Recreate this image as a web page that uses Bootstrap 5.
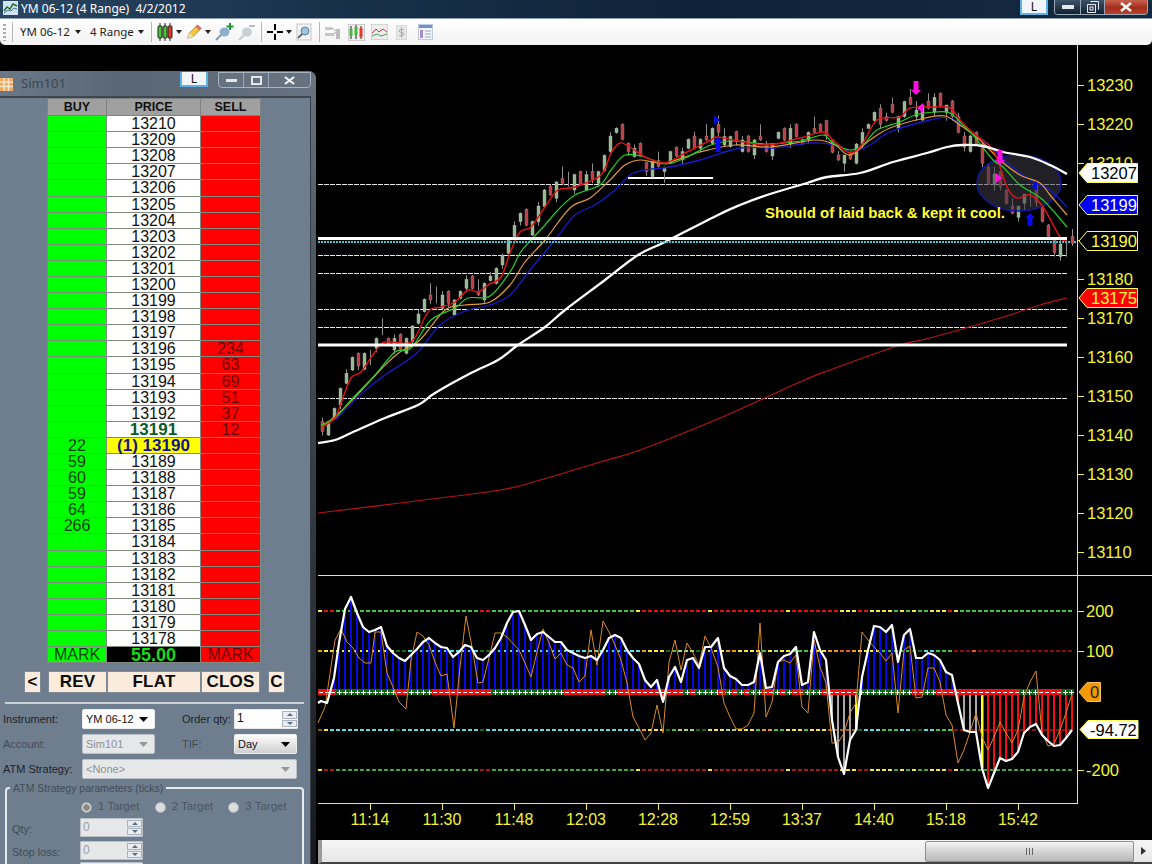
<!DOCTYPE html>
<html lang="en">
<head>
<meta charset="utf-8">
<title>YM 06-12 (4 Range) 4/2/2012</title>
<link href="https://cdn.jsdelivr.net/npm/bootstrap@5.3.0/dist/css/bootstrap.min.css" rel="stylesheet">
<style>
html,body{margin:0;background:#000;width:1152px;height:864px;overflow:hidden}
.desk{position:relative;width:1152px;height:864px;font-family:"Liberation Sans",Arial,sans-serif}
.app-title{height:19px;background:linear-gradient(90deg,#2a4561 0,#17304a 30%,#0f2338 60%,#14293f 100%);border-bottom:1px solid #8fa0b0;color:#fff;font:12px/17px "Noto Sans",sans-serif;padding-left:3px}
.app-title .ttl{margin-left:2px}
.lbtn{width:28px;height:15px;background:#f2f5f8;border:2px solid #5db1e4;border-top-width:0;color:#111;font:12px/13px "Noto Sans",sans-serif;text-align:center;padding:0;border-radius:0}
.capbox{display:flex;height:15px;border:1px solid #99a6b3;border-top:0;border-radius:0 0 4px 4px;overflow:hidden}
.capbox i{display:flex;align-items:center;justify-content:center;border-right:1px solid #99a6b3}
.capbox i:last-child{border-right:0}
.app-caps{margin-right:4px}
.app-caps .lbtn{margin-right:6px}
.app-min{width:26px;background:linear-gradient(#3e5268,#0f2134)}
.app-res{width:24px;background:linear-gradient(#3e5268,#0f2134)}
.app-cls{width:42px;background:linear-gradient(#c8614f,#a22d1c 55%,#b7432d)}
.tool-strip{height:26px;background:linear-gradient(#fff,#f2f2f2);border-radius:0 0 5px 5px;font:11.5px/26px "Noto Sans",sans-serif;color:#222;padding-left:3px}
.tgrip{width:3px;height:17px;background:repeating-linear-gradient(#aaa 0 2px,transparent 2px 4px)}
.tsep{width:1px;height:20px;background:#b8b8b8}
.tcar{width:0;height:0;border:3px solid transparent;border-top:4px solid #222;border-bottom:0;margin:0 0 0 3px}
.gap4{margin-left:4px}.gap5{margin-left:5px}.gap6{margin-left:6px}.gap7{margin-left:7px}.gap8{margin-left:8px}.gap9{margin-left:9px}.gap11{margin-left:11px}
.chart-host{height:795px;line-height:0}
.chart-host svg{display:block}
.cht-lbl{font:16.5px "Liberation Sans",Arial,sans-serif;fill:#f4f430}
.note{font:bold 15px "Liberation Sans",Arial,sans-serif;fill:#ffff33}
.hscroll{height:24px;background:linear-gradient(#f6f6f6,#e6e6e6);border-bottom:2px solid #444;border-left:4px solid #9a9a9a;margin-left:318px}
.thumb{margin-left:603px;width:209px;height:21px;background:linear-gradient(#f4f4f4,#d4d4d4 50%,#b9b9b9);border:1px solid #8e8e8e;border-radius:2px}
.grip3{width:8px;height:7px;background:repeating-linear-gradient(90deg,#666 0 1px,transparent 1px 3px)}
.sarrow{width:0;height:0;border:4px solid transparent;border-left:5px solid #333;border-right:0;margin-left:7px}
.sim-win{position:absolute;left:0;top:71px;width:316px;height:793px;background:#6f7e8f;border-radius:0 8px 0 0;overflow:hidden;font-size:11px;color:#1b232b}
.sim-rim{position:absolute;right:0;top:0;bottom:0;width:5px;background:linear-gradient(#68747f,#3a4149 45%,#16191d)}
.sim-head{height:25px;background:linear-gradient(90deg,#6a7887,#586675 40%,#66727f);color:#3c4753;font:13px/24px "Noto Sans",sans-serif;padding-right:5px}
.sim-head .lbtn{margin-top:1px;margin-right:10px}
.sim-head .capbox{margin-top:1px;background:#66727f;border-color:#a9b3bd;width:93px;border-top:1px solid #a9b3bd;height:16px}
.sim-head .capbox i{flex:1 1 0}
.sim-head .capbox i:last-child{flex:1.7 1 0}
.sim-icon{margin-top:7px}
.sim-body{border-top:2px solid #3e464f;margin-right:5px;height:768px;overflow:hidden;border-right:1px solid #353c44}
.table.ladder{table-layout:fixed;width:213px;margin:0 0 0 47px;border-collapse:collapse;--bs-table-bg:transparent}
.table.ladder>*>tr>*{padding:0;border:1px solid #808a80;height:16px;line-height:14px;text-align:center;box-shadow:none;vertical-align:middle;font-size:16px;color:#111}
.table.ladder>*>tr.rtall>*{height:17px}
.table.ladder>thead>tr>th{background:#a0a0a0;font-size:12.5px;font-weight:700;height:17px;border-color:#808080}
.table.ladder>tbody>tr>td.cbuy{background:#00ff00;color:#0b3d0b}
.table.ladder>tbody>tr>td.csell{background:#ff0000;color:#6a0505}
.table.ladder>tbody>tr>td.cprice{background:#fff}
.table.ladder>tbody>tr>td.cbest{background:#fff;color:#0a5a2a;font-weight:700;font-size:17px}
.table.ladder>tbody>tr>td.cmine{background:#ffff00;color:#14148c;font-weight:700;font-size:17px}
.table.ladder>tbody>tr>td.clast{background:#000;color:#19d919;font-weight:700;font-size:18px}
.lcol-a{width:59px}.lcol-b{width:94px}.lcol-c{width:60px}
.action-row{margin:8px 0 0 24px}
.act{background:#faebdc;color:#0c0c0c;border:1px solid #7f8a95;border-radius:0;height:22px;padding:0;font:bold 17px/20px "Liberation Sans",Arial,sans-serif;letter-spacing:.2px}
.act:hover{background:#faebdc;color:#0c0c0c}
.a-arrow{width:17px;margin-right:7px}.a-mid{width:59px}.a-flat{width:94px}.a-clos{width:59px;margin-right:8px}.a-c{width:17px}
.form-rule{margin:9px 6px 5px 5px;border:0;border-top:2px solid #c8d0d8;opacity:1}
.opt-row{height:20px;margin-bottom:5px;padding-left:3px}
.opt-row label{margin:0;line-height:20px}
.opt-row .lbl-a{width:79px}
.opt-row .lbl-b{width:52px;margin-left:27px}
.opt-row .lbl-off{color:#414c58}
.opt-sel.form-select{height:20px;min-height:0;padding:0 0 0 3px;font:11px/18px "Liberation Sans",Arial,sans-serif;border:1px solid #eee;border-radius:2px;background-color:#fff;color:#111;background-size:9px 5px;background-position:right 6px center;background-image:url("data:image/svg+xml,%3Csvg xmlns='http://www.w3.org/2000/svg' viewBox='0 0 9 5'%3E%3Cpath d='M0 0h9L4.5 5z' fill='%23000'/%3E%3C/svg%3E")}
.opt-sel.form-select:disabled{background-color:#e6e7e8;color:#8b9198;border-color:#b9c0c7;background-image:url("data:image/svg+xml,%3Csvg xmlns='http://www.w3.org/2000/svg' viewBox='0 0 9 5'%3E%3Cpath d='M0 0h9L4.5 5z' fill='%23999'/%3E%3C/svg%3E")}
.opt-grad.form-select{background-color:#e4e4e4;background-image:url("data:image/svg+xml,%3Csvg xmlns='http://www.w3.org/2000/svg' viewBox='0 0 9 5'%3E%3Cpath d='M0 0h9L4.5 5z' fill='%23000'/%3E%3C/svg%3E"),linear-gradient(#fcfcfc,#cfcfcf);background-position:right 6px center,0 0;background-size:9px 5px,100% 100%}
.w73{width:73px;flex:none}.w62{width:63px;flex:none}.w215{width:215px;flex:none}
.spin-box{background:#fff;border:1px solid #e8e8e8;height:20px;width:64px;flex:none;border-radius:1px;padding-left:2px;line-height:16px;color:#111;font-size:12px}
.spin-box.spin-off{background:#e6e7e8;color:#9a9ea4;width:63px;height:19px;border-color:#b9c0c7}
.spin-col{width:15px;margin-left:auto;height:100%;display:flex;flex-direction:column;gap:1px;padding:1px 0}
.spin-col b{flex:1;background:#e9edf2;border:1px solid #aab3bd;display:flex;align-items:center;justify-content:center}
.spin-col b::after{content:"";border:3px solid transparent}
.spin-col b.sup::after{border-bottom:3px solid #5a6c88;border-top:0}
.spin-col b.sdn::after{border-top:3px solid #5a6c88;border-bottom:0}
.atm-set{border:2px solid #e7eaed;border-radius:4px;margin:-3px 6px 0 5px;padding:0 0 0 5px;height:120px}
.atm-set legend{float:none;width:auto;font-size:10.5px;line-height:14px;margin:0 0 0 -2px;padding:0 3px;color:#414c58}
.radio-line{padding-left:69px;height:23px;padding-top:4px;color:#4a5562;font-size:11.5px}
.radio-one{width:76px;height:16px;display:flex;align-items:center;gap:6px}
.radio-one .form-check-input{width:11px;height:11px;margin:0;opacity:1;background-color:#dcdcdc;border-color:#aab0b7;float:none}
.radio-one .form-check-input:checked{background-color:#d8d8d8;border-color:#9aa0a6;background-image:radial-gradient(circle,#888 0 3px,transparent 3.5px)}
.qty-line{height:19px;margin-bottom:4px;color:#414c58}
.qty-line:nth-child(4){margin-bottom:2px}
.qty-line label{width:68px;margin:0;line-height:22px}
</style>
</head>
<body>
<div class="desk">
  <header class="app-title d-flex align-items-start">
    <svg width="16" height="15" viewBox="0 0 16 15"><rect width="15" height="14" y="1" fill="#cfe3f3"/><path d="M1 11l3-4 3 2 3-5 4 2" stroke="#2a6a2a" stroke-width="1.5" fill="none"/><path d="M1 13l4-3 3 1 3-3 3 1" stroke="#3b6fb0" fill="none"/></svg>
    <span class="ttl">YM 06-12 (4 Range)&nbsp;&nbsp;4/2/2012</span>
    <div class="ms-auto d-flex app-caps">
      <button type="button" class="btn lbtn">L</button>
      <div class="capbox">
        <i class="app-min"><svg width="12" height="4"><rect width="12" height="4" fill="#e4e8ec"/></svg></i>
        <i class="app-res"><svg width="12" height="12" viewBox="0 0 12 12"><path d="M3.5.5h8v8M.5 3.5h8v8h-8z" fill="none" stroke="#e8ecf0"/><rect x="3" y="6" width="3" height="3" fill="none" stroke="#e8ecf0"/></svg></i>
        <i class="app-cls"><svg width="14" height="10" viewBox="0 0 14 10"><path d="M2 1l10 8M12 1L2 9" stroke="#f4f4f4" stroke-width="2.6"/></svg></i>
      </div>
    </div>
  </header>
  <nav class="tool-strip d-flex align-items-center">
    <div class="tgrip"></div><div class="tsep gap6"></div>
    <span class="gap7">YM 06-12</span><i class="tcar gap5"></i>
    <span class="gap9">4 Range</span><i class="tcar gap4"></i>
    <div class="tsep gap7"></div>
    <svg class="gap5" width="16" height="18" viewBox="0 0 16 18"><g stroke="#222"><path d="M3 0v18M8 0v18M13 0v18"/><rect x="1" y="3" width="4" height="12" rx="1" fill="#4bc33c"/><rect x="6" y="3" width="4" height="12" rx="1" fill="#4bc33c"/><rect x="11" y="3" width="4" height="12" rx="1" fill="#e03a2b"/></g></svg><i class="tcar"></i>
    <svg class="gap4" width="16" height="18" viewBox="0 0 18 18"><path d="M2 16l2-6L13 1l4 4-9 9z" fill="#f2c83c" stroke="#a6852a"/><path d="M2 16l2-6 4 4z" fill="#f6e3b0"/><path d="M13 1l4 4-2 2-4-4z" fill="#d86a6a"/></svg><i class="tcar"></i>
    <svg class="gap4" width="19" height="18" viewBox="0 0 19 18"><path d="M1 17l6-6" stroke="#8a9aaa" stroke-width="2"/><ellipse cx="9.500" cy="9" rx="5" ry="4.500" fill="#8fb0cc"/><path d="M15 0v7M11.500 3.500h7" stroke="#1f9a2e" stroke-width="2"/></svg>
    <svg class="gap4" width="18" height="18" viewBox="0 0 18 18"><path d="M1 17l6-6" stroke="#c4c8cc" stroke-width="2"/><ellipse cx="9" cy="9" rx="5" ry="4.500" fill="#c9cfd4"/><path d="M11 3h6" stroke="#bbb" stroke-width="2"/></svg>
    <div class="tsep gap5"></div>
    <svg class="gap5" width="16" height="16" viewBox="0 0 16 16"><path d="M8 0v6M8 10v6M0 8h6M10 8h6" stroke="#000" stroke-width="2"/></svg><i class="tcar"></i>
    <svg class="gap4" width="16" height="18" viewBox="0 0 16 18"><rect x="1" y="1" width="14" height="16" fill="#f4f4f4" stroke="#c4c4c4"/><circle cx="9" cy="8" r="4" fill="#9ec2e0" stroke="#5c83a6"/><path d="M6 11l-4 4" stroke="#666" stroke-width="2"/></svg>
    <div class="tsep gap7"></div>
    <svg class="gap5" width="16" height="16" viewBox="0 0 16 16"><path d="M0 3h7v3H0zM0 9h9v3H0z" fill="#c8c8c8"/><path d="M11 5h4v10h-4z" fill="#bbb"/><path d="M7 4l4 3M9 10l2-2" stroke="#aaa"/></svg>
    <svg class="gap7" width="17" height="17" viewBox="0 0 17 17"><rect width="17" height="17" fill="#eee" stroke="#aaa"/><path d="M3 2v13M8 1v14M13 2v13" stroke="#222"/><rect x="1.500" y="5" width="3" height="7" fill="#45b83a"/><rect x="6.500" y="3" width="3" height="8" fill="#45b83a"/><rect x="11.500" y="4" width="3" height="9" fill="#e03a2b"/></svg>
    <svg class="gap6" width="17" height="16" viewBox="0 0 17 16"><rect width="17" height="16" fill="#eee" stroke="#bbb"/><path d="M1 9l4-4 3 3 4-3 4 3" stroke="#d35" fill="none"/><path d="M1 12l5-2 4 2 6-2" stroke="#4a4" fill="none"/></svg>
    <svg class="gap8" width="11" height="15" viewBox="0 0 11 15"><rect width="11" height="15" fill="#e8e8e8" stroke="#ccc"/><path d="M8 5c-1-1-5-1-5 1s5 1 5 3-4 2-5 1M5.500 2v11" stroke="#aaa" fill="none"/></svg>
    <svg class="gap11" width="15" height="16" viewBox="0 0 15 16"><rect width="15" height="16" fill="#f4f6fa" stroke="#8da2c4"/><rect x="1" y="1" width="13" height="3" fill="#6f93c9"/><rect x="2" y="6" width="3" height="8" fill="#a98bd1"/><path d="M7 7h6M7 10h6M7 13h6" stroke="#8ab"/></svg>
  </nav>
  <div class="chart-host" id="chart"></div>
  <div class="hscroll d-flex align-items-center">
    <div class="thumb d-flex align-items-center justify-content-center"><div class="grip3"></div></div>
    <div class="sarrow"></div>
  </div>

  <section class="sim-win">
    <div class="sim-rim"></div>
    <div class="sim-head d-flex align-items-start">
      <svg class="sim-icon" width="13" height="13" viewBox="0 0 13 13"><rect width="13" height="13" fill="#f2a95e"/><path d="M4 0v13M8.500 0v13M0 4h13M0 8.500h13" stroke="#f7e5cf" stroke-width="1.500"/></svg>
      <span class="ms-2">Sim101</span>
      <button type="button" class="btn lbtn ms-auto">L</button>
      <div class="capbox">
        <i><svg width="11" height="3"><rect width="11" height="3" fill="#e4e8ec"/></svg></i>
        <i><svg width="11" height="9"><rect x="1" y="1" width="9" height="7" fill="none" stroke="#e4e8ec" stroke-width="2"/></svg></i>
        <i><svg width="11" height="9" viewBox="0 0 11 9"><path d="M1 1l9 7M10 1L1 8" stroke="#f0f0f0" stroke-width="2.200"/></svg></i>
      </div>
    </div>
    <div class="sim-body">
      <table class="table ladder">
        <colgroup><col class="lcol-a"><col class="lcol-b"><col class="lcol-c"></colgroup>
        <thead><tr><th>BUY</th><th>PRICE</th><th>SELL</th></tr></thead>
        <tbody id="ladder"></tbody>
      </table>
      <div class="action-row d-flex">
        <button type="button" class="btn act a-arrow">&lt;</button>
        <button type="button" class="btn act a-mid">REV</button>
        <button type="button" class="btn act a-flat">FLAT</button>
        <button type="button" class="btn act a-clos">CLOS</button>
        <button type="button" class="btn act a-c">C</button>
      </div>
      <hr class="form-rule">
      <div class="d-flex align-items-center opt-row">
        <label class="lbl-a">Instrument:</label>
        <select class="form-select opt-sel w73"><option>YM 06-12</option></select>
        <label class="lbl-b">Order qty:</label>
        <div class="spin-box d-flex"><span>1</span><div class="spin-col"><b class="sup"></b><b class="sdn"></b></div></div>
      </div>
      <div class="d-flex align-items-center opt-row">
        <label class="lbl-a lbl-off">Account:</label>
        <select class="form-select opt-sel w73" disabled><option>Sim101</option></select>
        <label class="lbl-b lbl-off">TIF:</label>
        <select class="form-select opt-sel opt-grad w62"><option>Day</option></select>
      </div>
      <div class="d-flex align-items-center opt-row">
        <label class="lbl-a">ATM Strategy:</label>
        <select class="form-select opt-sel w215" disabled><option>&lt;None&gt;</option></select>
      </div>
      <fieldset class="atm-set">
        <legend>ATM Strategy parameters (ticks)</legend>
        <div class="radio-line d-flex">
          <div class="radio-one"><input class="form-check-input" type="radio" name="tg" checked disabled><span>1 Target</span></div>
          <div class="radio-one"><input class="form-check-input" type="radio" name="tg" disabled><span>2 Target</span></div>
          <div class="radio-one"><input class="form-check-input" type="radio" name="tg" disabled><span>3 Target</span></div>
        </div>
        <div class="qty-line d-flex"><label>Qty:</label><div class="spin-box spin-off d-flex"><span>0</span><div class="spin-col"><b class="sup"></b><b class="sdn"></b></div></div></div>
        <div class="qty-line d-flex"><label>Stop loss:</label><div class="spin-box spin-off d-flex"><span>0</span><div class="spin-col"><b class="sup"></b><b class="sdn"></b></div></div></div>
        <div class="qty-line d-flex"><label></label><div class="spin-box spin-off d-flex"></div></div>
      </fieldset>
    </div>
  </section>
</div>
<script src="https://cdn.jsdelivr.net/npm/bootstrap@5.3.0/dist/js/bootstrap.bundle.min.js"></script>
<script>
(function(){
/* ladder */
var buy={13190:22,13189:59,13188:60,13187:59,13186:64,13185:266};
var sell={13196:234,13195:63,13194:69,13193:51,13192:37,13191:12};
var tall={13206:1,13195:1,13184:1};
var h='';
for(var p=13210;p>=13178;p--){
  var cls=p===13191?'cbest':p===13190?'cmine':'cprice';
  var txt=p===13190?'(1) 13190':p;
  h+='<tr'+(tall[p]?' class="rtall"':'')+'><td class="cbuy">'+(buy[p]||'')+'</td><td class="'+cls+'">'+txt+'</td><td class="csell">'+(sell[p]||'')+'</td></tr>';
}
h+='<tr><td class="cbuy">MARK</td><td class="clast">55.00</td><td class="csell">MARK</td></tr>';
document.getElementById('ladder').innerHTML=h;

/* chart: all coordinates are page pixels */
var s='';
function poly(pts,c,w,ex){return '<polyline fill="none" stroke="'+c+'" stroke-width="'+w+'" stroke-linejoin="round" points="'+pts.map(function(a){return a[0]+','+a[1]}).join(' ')+'" '+(ex||'')+'/>';}
function line(x1,y1,x2,y2,c,w,ex){return '<line x1="'+x1+'" y1="'+y1+'" x2="'+x2+'" y2="'+y2+'" stroke="'+c+'" stroke-width="'+(w||1)+'" '+(ex||'')+'/>';}
function txt2(x,y,t,cl,ex){return '<text x="'+x+'" y="'+y+'" class="'+(cl||'cht-lbl')+'" '+(ex||'')+'>'+t+'</text>';}
function smooth(p,c,w){var d='M'+p[0][0]+' '+p[0][1];for(var i=0;i<p.length-1;i++){var a=p[i-1]||p[i],b=p[i],e=p[i+1],f=p[i+2]||e;d+='C'+(b[0]+(e[0]-a[0])/6)+' '+(b[1]+(e[1]-a[1])/6)+' '+(e[0]-(f[0]-b[0])/6)+' '+(e[1]-(f[1]-b[1])/6)+' '+e[0]+' '+e[1];}return '<path d="'+d+'" fill="none" stroke="'+c+'" stroke-width="'+w+'"/>';}

/* horizontal levels, behind candles */
[184,255,273,309,327,398].forEach(function(y){s+=line(318,y+.5,1067,y+.5,'#e8e8e8',1,'stroke-dasharray="5 1"');});
s+=line(628,178,713,178,'#fff',2);

/* candles: [zoomX, top, bottom, type, wickTop, wickBottom] u up, d down, w wick only */
var c7=[[13,905,935,'d'],[31,905,945,'u'],[49,865,895,'u'],[67,805,855,'u'],[85,760,790,'u'],[103,712,750,'u'],[121,700,738,'d'],[139,700,748,'u'],[157,690,735,'w'],[175,655,685,'u'],[193,595,645,'w'],[211,655,672,'d'],[229,655,690,'u'],[247,643,688,'d'],[265,655,700,'u'],[283,618,665,'u'],[301,582,610,'u'],[319,538,575,'u'],[337,525,540,'d',490],[355,500,550,'w'],[373,525,565,'u'],[391,514,550,'d'],[409,540,585,'u'],[427,514,535,'u'],[445,478,505,'u'],[463,468,505,'d'],[481,515,525,'d',478],[499,490,540,'u'],[517,468,482,'u'],[535,445,490,'u'],[553,405,435,'u'],[571,362,400,'u'],[589,316,350,'u'],[607,280,305,'u'],[625,268,316,'d'],[643,305,345,'u'],[661,258,305,'u'],[679,210,260,'u'],[697,198,225,'d'],[715,186,235,'u'],[733,175,190,'d',140],[751,155,200,'w'],[769,164,210,'u'],[787,155,195,'d'],[805,164,210,'u'],[823,154,178,'d',130],[841,155,190,'u'],[859,106,152,'u'],[877,48,95,'u'],[895,25,38,'u'],[913,13,58,'d'],[931,70,95,'d'],[949,85,110,'u'],[967,70,106,'d'],[985,128,155,'d'],[1003,125,170,'u'],[1021,122,140,'d',95],[1039,145,155,'u',140,188],[1057,95,130,'u'],[1075,82,108,'d'],[1093,95,120,'u'],[1111,58,85,'u'],[1129,48,85,'d',35],[1147,58,85,'u'],[1165,48,60,'d',12],[1183,25,70,'u']];
var c8=[[55,148,172,'d',122],[73,185,210,'u',160],[91,185,215,'u'],[109,170,200,'d'],[127,195,230,'u'],[145,183,230,'d'],[163,195,240,'u'],[181,183,195,'d',148],[199,210,230,'d'],[217,207,243,'u'],[235,172,190,'u'],[253,160,195,'d'],[271,160,207,'u'],[289,148,185,'d'],[307,193,207,'d'],[325,172,195,'u'],[343,160,172,'d',125],[361,148,170,'d'],[379,137,182,'d'],[397,195,232,'d'],[415,240,255,'d'],[433,240,265,'u',240,290],[451,230,252,'d'],[469,207,265,'u'],[487,172,207,'u'],[505,148,160,'u'],[523,112,137,'u'],[541,100,148,'d',88],[559,125,137,'d'],[577,88,112,'d',68],[595,125,160,'u'],[613,80,125,'u'],[631,67,88,'d',42],[649,105,125,'u',78],[667,90,135,'u'],[685,78,100,'d',55],[703,67,112,'u'],[721,55,95,'d'],[739,90,112,'u',90,137],[757,78,125,'d'],[775,125,172,'d']];
var c4=[[103,198,232,'d'],[121,198,245,'u'],[139,187,222,'d'],[157,222,280,'d'],[175,292,340,'d'],[193,312,345,'u',290,362],[211,305,350,'d'],[229,360,400,'d'],[247,408,430,'d',385],[265,408,442,'u',408,455],[283,372,400,'u',372,420],[301,360,410,'w'],[319,345,398,'d'],[337,408,455,'d'],[355,465,500,'d'],[373,512,548,'d'],[391,522,560,'u',510,572],[409,512,560,'w'],[427,500,520,'d',478,525]];
function drawC(list,ox,oy){list.forEach(function(k,i){
  var x=Math.round(ox+k[0]/3)+.5,t=oy+k[1]/3,b=oy+k[2]/3;
  if(k[3]==='w'){s+=line(x,t,x,b,'#8c8c8c',1);return;}
  var wt=k[4]!==undefined?oy+k[4]/3:t-(i%4===0?4:1),wb=k[5]!==undefined?oy+k[5]/3:b+(i%3===0?4:1);
  s+=line(x,wt,x,wb,'#8c8c8c',1);
  s+='<rect x="'+(x-1.5)+'" y="'+t+'" width="3" height="'+(b-t)+'" fill="'+(k[3]==='u'?'#98b892':'#c03c44')+'" stroke="'+(k[3]==='u'?'#b4c4b0':'#a87a7a')+'" stroke-width=".4"/>';
});}
drawC(c7,318,120);drawC(c8,700,75);drawC(c4,930,70);

/* ellipse */
s+='<ellipse cx="1019" cy="183" rx="42" ry="28" fill="#3a3a46" fill-opacity=".55" stroke="#15159c" stroke-width="1.500"/>';

/* moving averages */
s+=smooth([[318,513],[400,503],[500,490],[540,480],[600,462],[640,450],[720,418],[800,382],[830,370],[900,345],[930,338],[1000,318],[1040,305],[1067,298]],'#b81414',1.2);
s+=smooth([[335,420],[360,395],[385,375],[405,362],[420,350],[440,325],[465,311],[490,305],[510,295],[530,270],[555,240],[575,215],[595,205],[615,190],[630,175],[645,170],[670,167],[700,160],[740,148],[775,148],[810,143],[835,145],[852,152],[870,145],[890,132],[930,120],[950,118],[965,128],[985,142],[1010,165],[1030,180],[1050,190],[1067,207]],'#1a1ac8',1.3);
s+=smooth([[321,428],[340,412],[360,392],[385,365],[400,352],[420,340],[445,310],[465,305],[490,302],[510,285],[525,262],[545,240],[570,208],[590,198],[610,180],[625,165],[640,160],[665,163],[700,152],[735,145],[770,147],[815,140],[835,145],[850,155],[870,140],[890,128],[925,118],[945,116],[960,125],[980,140],[1000,160],[1020,175],[1040,183],[1050,195],[1067,215]],'#e09a3a',1.2);
s+=smooth([[321,425],[335,418],[351,400],[375,375],[395,352],[411,348],[431,320],[455,308],[468,298],[490,296],[510,272],[520,253],[531,240],[545,225],[558,210],[575,195],[600,185],[611,170],[625,155],[645,157],[665,164],[685,158],[711,145],[733,141],[767,144],[800,141],[823,135],[833,143],[850,150],[863,145],[877,130],[900,122],[915,115],[935,112],[950,113],[963,125],[973,135],[993,160],[1003,167],[1020,185],[1043,200],[1067,227]],'#22d022',1.2);
s+=smooth([[321,428],[335,418],[341,403],[351,378],[361,372],[375,352],[385,342],[411,342],[425,317],[431,309],[441,307],[455,302],[468,290],[478,292],[488,285],[501,277],[510,253],[520,232],[531,227],[545,207],[558,190],[575,187],[601,175],[611,153],[620,143],[630,147],[645,157],[665,163],[685,153],[711,140],[717,137],[733,140],[767,145],[800,138],[823,132],[833,140],[850,153],[863,143],[877,120],[900,117],[910,108],[933,107],[950,108],[960,120],[973,133],[993,150],[1007,187],[1017,198],[1030,195],[1043,207],[1060,237],[1067,241]],'#e01414',1.4);
s+=smooth([[318,443],[335,440],[351,433],[385,418],[418,405],[435,393],[471,373],[498,360],[518,345],[545,327],[565,310],[605,280],[638,255],[665,242],[718,215],[740,205],[767,195],[807,183],[827,177],[860,173],[893,162],[927,153],[947,147],[963,145],[983,146],[1003,152],[1030,157],[1050,165],[1067,174]],'#fff',2.3);

/* thick levels */
s+=line(318,238.5,1067,238.5,'#fff',3);
s+=line(318,345,1067,345,'#fff',3);
s+=line(318,242,1077,242,'#3cc8d0',2,'stroke-dasharray="2 1"');
s+=line(1072.5,229,1072.5,246,'#8a8a8a',1);
s+='<rect x="1071" y="237" width="3" height="6" fill="#c8434b"/>';

/* arrows */
function arrow(x,y1,y2,c){var d=y2>y1?1:-1;return '<path d="M'+(x-2.5)+' '+y1+'V'+(y2-5*d)+'H'+(x-5)+'L'+x+' '+y2+'L'+(x+5)+' '+(y2-5*d)+'H'+(x+2.5)+'V'+y1+'z" fill="'+c+'"/>';}
s+=arrow(916,81,95,'#ff10e0');s+=arrow(1000,150,165,'#ff10e0');
s+=arrow(1030,226,213,'#0a0af0');s+=arrow(718,152,137,'#0a0af0');
function tri(x,y,dir,c){return '<path d="M'+x+' '+(y-5)+'L'+(x+dir*6)+' '+y+'L'+x+' '+(y+5)+'z" fill="'+c+'"/>';}
s+=tri(923,108,-1,'#ff10e0');s+=tri(996,178,1,'#ff10e0');s+=tri(714,120,1,'#0a0ad0');s+=tri(1037,186,-1,'#0a0ad0');

s+=txt2(765,218,'Should of laid back &amp; kept it cool.','note');

/* main axis */
var AX='#eeee44';
s+=line(1077.5,45,1077.5,804,AX,1);
s+=line(318,575.5,1152,575.5,AX,1);
s+=line(318,803.5,1077,803.5,AX,1);
[[13230,85],[13220,124],[13210,163],[13180,279],[13170,318],[13160,357],[13150,396],[13140,435],[13130,474],[13120,513],[13110,552]].forEach(function(a){
  s+=line(1078,a[1]+.5,1084,a[1]+.5,AX,1);
  s+=txt2(1087,a[1]+6,a[0]);
});
s+=line(1078,240.5,1084,240.5,AX,1);

function tag(x1,y1,y2,x2,fill,stroke,tcol,t,tx){var m=(y1+y2)/2;
  return '<polygon points="'+x1+','+m+' '+(x1+8)+','+y1+' '+x2+','+y1+' '+x2+','+y2+' '+(x1+8)+','+y2+'" fill="'+fill+'" stroke="'+stroke+'"/>'+txt2(tx,m+6,t,'cht-lbl','style="fill:'+tcol+'"');}
s+=tag(1079,163.5,182.5,1137.5,'#fff','#ffff55','#000',13207,1091);
s+=tag(1079,195.5,214.5,1137.5,'#0000f0','#ffff55','#fff',13199,1091);
s+=tag(1079,231.5,250.5,1137.5,'#000','#ffff55','#ffff33',13190,1091);
s+=tag(1079,288.5,307.5,1137.5,'#ff0000','#ffff55','#ffff33',13175,1091);

/* indicator panel dashed lines: [endX,colour] runs */
var R='#e01010',DR='#8a1010',Y='#f4e83a',G='#3cc83c',DG='#156a15',C='#4ae0e0',O='#f09a10',LG='#a6d87a',OR='#e85a10';
var top200=[[324,Y],[336,R],[475,G],[487,R],[631,G],[637,Y],[703,R],[709,Y],[786,R],[792,Y],[835,R],[853,Y],[865,R],[889,Y],[900,G],[906,Y],[912,G],[918,Y],[930,G],[948,Y],[954,R],[960,Y],[1074,G]];
var bot200=top200.map(function(a){return [a[0],a[1]===R?'#a81818':a[1]===G?'#3ea83e':a[1]];});
var l100=[[324,O],[336,Y],[396,Y],[408,DG],[475,C],[487,DG],[637,C],[642,G],[648,O],[666,Y],[672,DG],[678,G],[696,LG],[708,DG],[724,Y],[736,O],[760,Y],[766,G],[772,Y],[778,LG],[790,Y],[808,G],[828,Y],[835,O],[852,OR],[858,O],[880,Y],[912,G],[924,DG],[936,C],[954,G],[967,DR],[976,OR],[1074,DR]];
var lm94=[[324,'#8a5a20'],[330,Y],[396,C],[402,DG],[475,C],[481,DG],[637,C],[642,G],[648,O],[664,Y],[670,DG],[678,G],[696,LG],[708,DG],[724,Y],[736,LG],[754,Y],[760,G],[772,O],[784,G],[800,Y],[810,G],[828,Y],[858,'#a06020'],[864,DG],[880,C],[896,G],[912,C],[924,DG],[936,C],[950,G],[1074,DR]];
function dashed(y,runs){var o='',x=318,i=0;while(x<1074){while(i<runs.length-1&&x>=runs[i][0])i++;o+='<rect x="'+x+'" y="'+y+'" width="4" height="2" fill="'+runs[i][1]+'"/>';x+=6;}return o;}
s+=dashed(610,top200)+dashed(650,l100)+dashed(729,lm94)+dashed(769,bot200);

/* CCI series */
var W=[[318,703],[321,701],[327,703],[334,678],[339,643],[345,609],[351,597],[357,613],[363,627],[369,632],[375,630],[381,627],[387,646],[393,653],[399,658],[405,661],[411,655],[417,649],[423,642],[429,638],[435,643],[441,647],[447,648],[453,657],[459,652],[465,645],[471,647],[477,658],[483,660],[489,655],[495,648],[501,638],[507,623],[513,612],[519,611],[525,625],[531,640],[537,634],[543,632],[549,637],[555,642],[561,642],[567,650],[573,653],[579,656],[585,658],[591,656],[597,660],[603,650],[609,638],[615,635],[621,638],[627,650],[633,658],[639,664],[645,680],[651,687],[657,680],[663,702],[669,677],[675,667],[681,682],[687,660],[693,658],[699,668],[705,647],[711,647],[718,638],[724,668],[730,676],[736,679],[742,685],[748,685],[754,682],[760,653],[766,688],[772,687],[778,662],[784,656],[790,654],[796,647],[802,685],[808,682],[814,632],[820,650],[826,660],[832,720],[838,757],[844,774],[850,740],[856,730],[862,677],[868,650],[874,626],[880,627],[886,632],[892,625],[898,662],[904,635],[910,629],[916,658],[922,658],[928,653],[934,655],[940,660],[946,672],[952,675],[958,703],[964,730],[970,732],[976,732],[982,768],[988,788],[994,773],[1000,758],[1006,761],[1012,759],[1018,752],[1024,733],[1030,727],[1036,724],[1042,735],[1048,741],[1054,746],[1060,745],[1066,738],[1072,730]];
var O2=[[318,723],[325,707],[335,640],[341,629],[347,642],[353,648],[359,658],[365,663],[371,663],[375,632],[381,632],[387,673],[393,687],[399,702],[406,709],[411,660],[417,632],[423,636],[429,645],[435,662],[441,676],[447,674],[454,728],[460,667],[466,616],[472,647],[478,683],[483,682],[489,658],[495,633],[501,633],[507,637],[519,650],[525,663],[531,677],[537,652],[543,629],[549,643],[555,659],[561,653],[567,665],[573,668],[579,682],[585,676],[591,630],[597,665],[603,621],[609,632],[615,645],[621,660],[627,683],[633,717],[639,728],[645,740],[651,733],[657,705],[663,733],[669,662],[675,640],[681,670],[687,643],[693,653],[699,665],[705,636],[711,648],[718,667],[724,703],[730,717],[736,729],[742,729],[748,725],[754,713],[760,623],[766,717],[772,702],[778,662],[784,660],[790,663],[796,655],[802,707],[808,713],[814,640],[820,667],[826,683],[832,743],[838,743],[844,733],[850,713],[856,703],[862,632],[868,640],[874,647],[880,653],[886,661],[892,653],[898,713],[904,650],[910,646],[916,698],[922,697],[928,668],[934,668],[940,682],[946,715],[952,725],[958,763],[964,750],[970,732],[976,713],[982,737],[988,750],[994,737],[1000,722],[1006,733],[1012,743],[1018,730],[1024,697],[1030,682],[1036,671],[1042,733],[1048,746],[1054,744],[1060,730],[1066,713],[1072,694]];
/* histogram */
W.forEach(function(a){
  var x=a[0],y=a[1];
  if(x<330)return;
  if(y<689){s+='<rect x="'+(x-1)+'" y="'+y+'" width="2" height="'+(689-y)+'" fill="#0808e0"/>';}
  else if(y>695){
    var col=(x>=832&&x<856)||(x>=964&&x<982)?'#a8a8a8':(x===856||x===982)?'#ffff22':'#f01010';
    var w=(x===856||x===982)?2.5:2;
    s+='<rect x="'+(x-1)+'" y="695" width="'+w+'" height="'+(y-695)+'" fill="'+col+'"/>';
  }
});
/* zero band */
(function(){var prev=318,seq=[[336,'r'],[396,'g'],[408,'r'],[432,'g'],[492,'r'],[564,'g'],[606,'r'],[618,'g'],[684,'r'],[690,'g'],[696,'r'],[718,'g'],[726,'r'],[732,'g'],[738,'r'],[744,'g'],[750,'r'],[762,'g'],[774,'r'],[780,'g'],[786,'r'],[792,'g'],[804,'r'],[822,'g'],[858,'r'],[912,'g'],[924,'r'],[936,'g'],[1020,'r'],[1038,'g'],[1062,'r'],[1074,'g']];
seq.forEach(function(b){
  var isG=b[1]==='g';
  s+='<rect x="'+prev+'" y="689" width="'+(b[0]-prev)+'" height="6" fill="'+(isG?'#0a6a14':'#ee1010')+'"/>';
  for(var x=prev;x<b[0];x+=6){
    s+=line(x+1,692.5,x+(isG?6:5),692.5,'#fff',1);
    if(isG)s+=line(x+3.5,690,x+3.5,695,'#fff',1);
  }
  prev=b[0];
});})();
s+=poly(O2,'#d88a28',1);
s+=poly(W,'#fff',2.2);

/* panel axis */
[[200,611],[100,651],[-200,770]].forEach(function(a){
  s+=line(1078,a[1]+.5,1084,a[1]+.5,AX,1);
  s+=txt2(1086,a[1]+6,a[0]);
});
s+=tag(1079,682.5,701.5,1100.5,'#f49a00','#f8c060','#222',0,1090);
s+=tag(1080,720.5,738.5,1138,'#fff','#ffff55','#000','-94.72',1090);

/* time axis */
[[370,'11:14'],[442,'11:30'],[514,'11:48'],[586,'12:03'],[658,'12:28'],[730,'12:59'],[802,'13:37'],[874,'14:40'],[946,'15:18'],[1018,'15:42']].forEach(function(a){
  s+=line(a[0]+.5,804,a[0]+.5,810,AX,1);
  s+=txt2(a[0],825,a[1],'cht-lbl','text-anchor="middle" style="font-size:16px"');
});

document.getElementById('chart').innerHTML='<svg xmlns="http://www.w3.org/2000/svg" width="1152" height="795" viewBox="0 45 1152 795">'+s+'</svg>';
})();
</script>
</body>
</html>
